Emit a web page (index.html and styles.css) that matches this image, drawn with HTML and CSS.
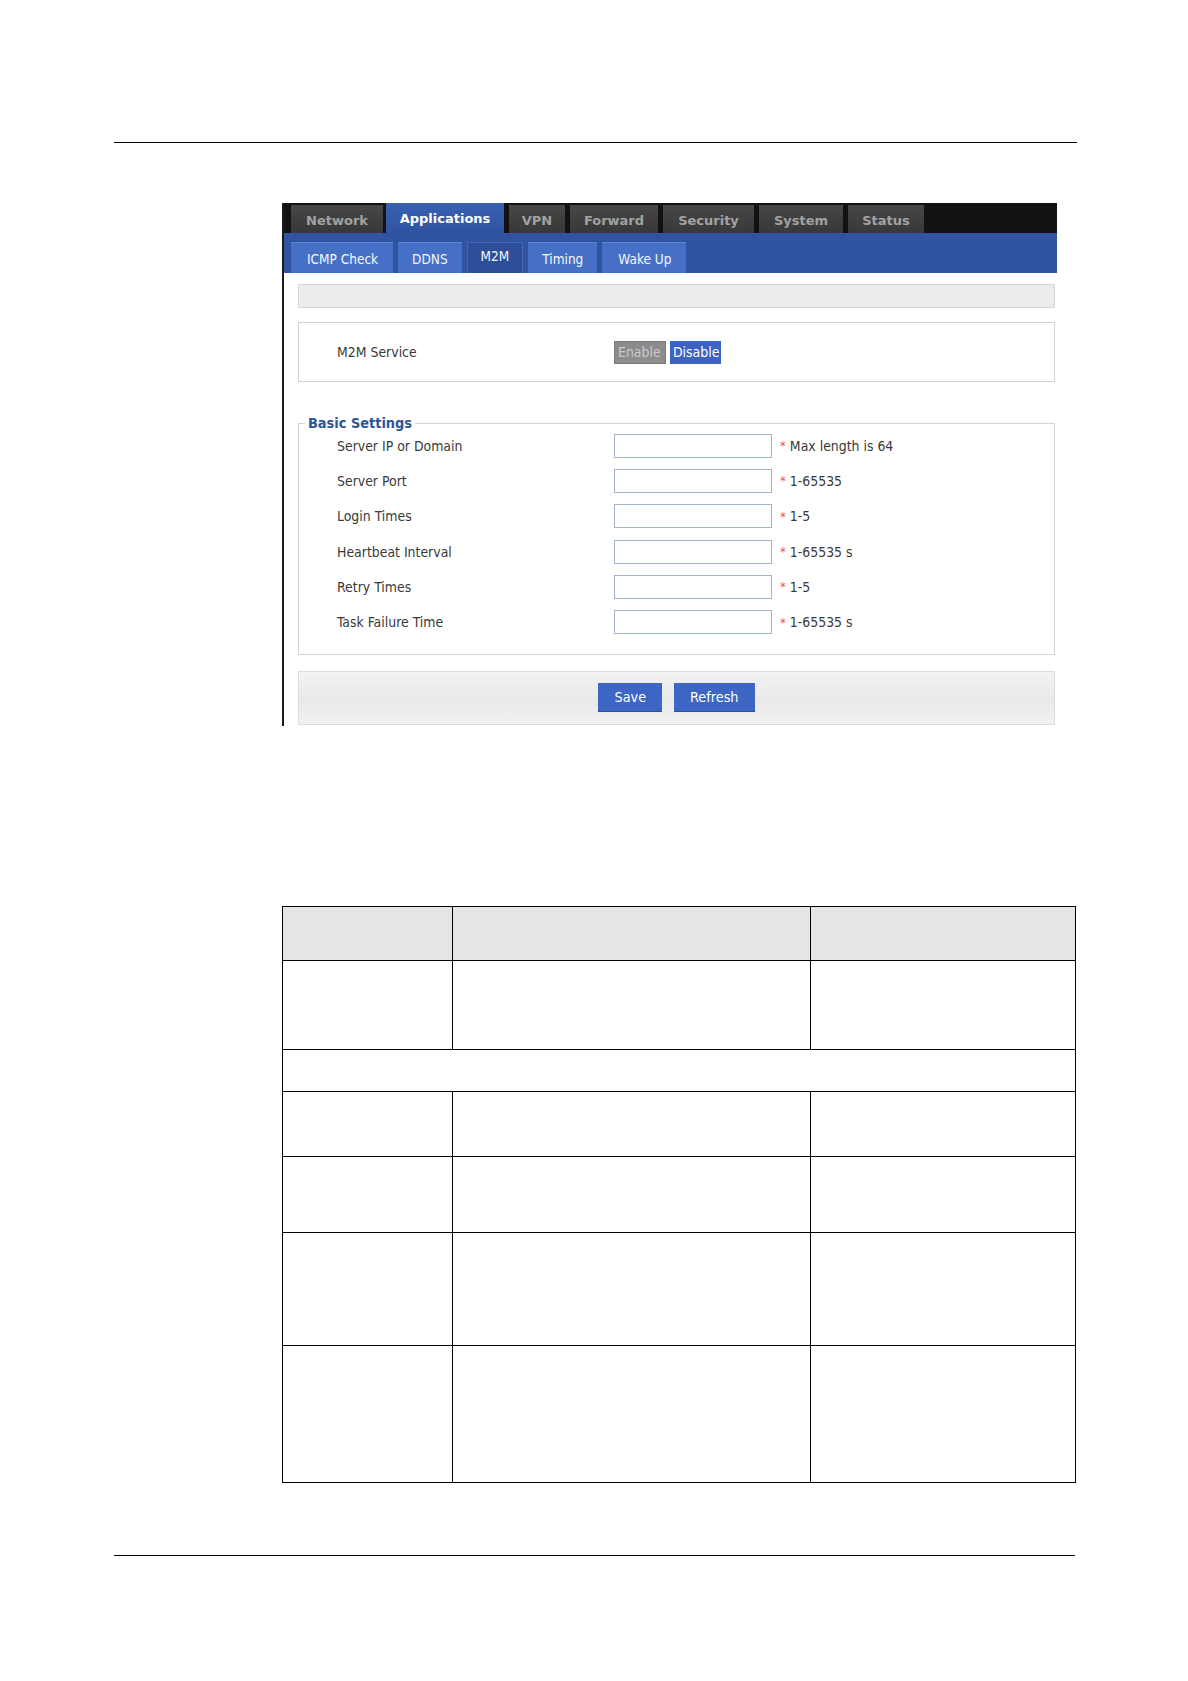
FILE: index.html
```html
<!DOCTYPE html>
<html lang="en">

<head>
    <meta charset="UTF-8" />
    <meta name="viewport" content="width=device-width, initial-scale=1.0" />
    <title>M2M settings</title>
    <link rel="stylesheet" href="styles.css">
</head>

<body>
    <div class="page">
        <div class="rule"></div>

        <div class="shot">
            <div class="mainnav">
                <span class="tab tab-network">Network</span>
                <span class="tab tab-apps active">Applications</span>
                <span class="tab tab-vpn">VPN</span>
                <span class="tab tab-forward">Forward</span>
                <span class="tab tab-security">Security</span>
                <span class="tab tab-system">System</span>
                <span class="tab tab-status">Status</span>
            </div>
            <div class="subnav">
                <span class="subtab wide">ICMP Check</span>
                <span class="subtab">DDNS</span>
                <span class="subtab active">M2M</span>
                <span class="subtab">Timing</span>
                <span class="subtab wide">Wake Up</span>
            </div>

            <div class="content">
                <div class="titlebar"></div>

                <div class="service-box">
                    <span class="label">M2M Service</span>
                    <div class="switch">
                        <span class="sw-btn off">Enable</span>
                        <span class="sw-btn on">Disable</span>
                    </div>
                </div>

                <fieldset class="settings">
                    <legend>Basic Settings</legend>
                    <div class="row">
                        <span class="label">Server IP or Domain</span>
                        <input type="text" class="field" />
                        <span class="req">*</span><span class="hint">Max length is 64</span>
                    </div>
                    <div class="row">
                        <span class="label">Server Port</span>
                        <input type="text" class="field" />
                        <span class="req">*</span><span class="hint">1-65535</span>
                    </div>
                    <div class="row">
                        <span class="label">Login Times</span>
                        <input type="text" class="field" />
                        <span class="req">*</span><span class="hint">1-5</span>
                    </div>
                    <div class="row">
                        <span class="label">Heartbeat Interval</span>
                        <input type="text" class="field" />
                        <span class="req">*</span><span class="hint">1-65535 s</span>
                    </div>
                    <div class="row">
                        <span class="label">Retry Times</span>
                        <input type="text" class="field" />
                        <span class="req">*</span><span class="hint">1-5</span>
                    </div>
                    <div class="row">
                        <span class="label">Task Failure Time</span>
                        <input type="text" class="field" />
                        <span class="req">*</span><span class="hint">1-65535 s</span>
                    </div>
                </fieldset>

                <div class="actions">
                    <button class="action-btn">Save</button>
                    <button class="action-btn">Refresh</button>
                </div>
            </div>
        </div>

        <table class="params">
            <tr class="head">
                <td class="c1"></td>
                <td class="c2"></td>
                <td class="c3"></td>
            </tr>
            <tr class="r1">
                <td></td>
                <td></td>
                <td></td>
            </tr>
            <tr class="section">
                <td colspan="3"></td>
            </tr>
            <tr class="r2">
                <td></td>
                <td></td>
                <td></td>
            </tr>
            <tr class="r3">
                <td></td>
                <td></td>
                <td></td>
            </tr>
            <tr class="r4">
                <td></td>
                <td></td>
                <td></td>
            </tr>
            <tr class="r5">
                <td></td>
                <td></td>
                <td></td>
            </tr>
        </table>

        <div class="rule rule-bottom"></div>
    </div>
</body>

</html>
```

FILE: styles.css
```css
:root {
    --ui-font: "DejaVu Sans Condensed", "DejaVu Sans", sans-serif;
    --tab-font: "DejaVu Sans", Verdana, sans-serif;
    --text-color: #333;
    --blue-bar: #3054a2;
    --blue-tab: #4670c5;
    --box-border: #d4d4d4;
}

body {
    margin: 0;
    padding: 0;
    background: #fff;
    font-family: var(--ui-font);
    color: var(--text-color);
}

.page {
    padding-top: 142px;
}

.rule {
    margin-left: 114px;
    width: 963px;
    height: 1px;
    background: #000;
}

.rule-bottom {
    margin-top: 72px;
    width: 961px;
}

/* screenshot panel */
.shot {
    margin: 60px 0 0 282px;
    width: 773px;
    border-left: 2px solid #1a1a1a;
}

.mainnav {
    height: 30px;
    background: #121212;
    display: flex;
    align-items: flex-end;
    padding-left: 7px;
    gap: 5px;
}

.tab {
    height: 28px;
    box-sizing: border-box;
    padding-top: 3px;
    line-height: 25px;
    text-align: center;
    background: linear-gradient(#474747, #383838);
    color: #a2a2a2;
    font-family: var(--tab-font);
    font-weight: bold;
    font-size: 13px;
}

.tab-network { width: 92px; }
.tab-apps { width: 118px; }
.tab-vpn { width: 56px; }
.tab-forward { width: 88px; }
.tab-security { width: 91px; }
.tab-system { width: 84px; }
.tab-status { width: 76px; }

.tab.active {
    height: 30px;
    padding-top: 3px;
    margin-left: -2px;
    background: linear-gradient(#3a60b2, var(--blue-bar));
    color: #fff;
}

.subnav {
    height: 40px;
    box-sizing: border-box;
    background: var(--blue-bar);
    display: flex;
    align-items: flex-end;
    padding-left: 7px;
    gap: 5px;
}

.subtab {
    height: 31px;
    line-height: 33px;
    padding: 0 14px;
    box-sizing: border-box;
    background: var(--blue-tab);
    border-top: 1px solid #5a86d8;
    color: #f4f6fb;
    font-size: 13.5px;
}

.subtab.wide {
    padding: 0 15px 0 16px;
}

.subtab.active {
    background: #2d4e99;
    border: 1px solid #4266b4;
    border-bottom: none;
    line-height: 27px;
    padding: 0 13px;
}

.content {
    padding: 11px 2px 1px 14px;
}

.titlebar {
    height: 24px;
    box-sizing: border-box;
    background: #ececec;
    border: 1px solid #d8d8d8;
}

.service-box {
    margin-top: 14px;
    height: 60px;
    box-sizing: border-box;
    border: 1px solid var(--box-border);
    display: flex;
    align-items: center;
    padding-left: 38px;
}

.label {
    width: 277px;
    font-size: 13.9px;
    color: #3a3a3a;
}

.switch {
    display: flex;
    gap: 4px;
}

.sw-btn {
    height: 23px;
    line-height: 23px;
    padding: 0 3px;
    font-size: 13.9px;
}

.sw-btn.off {
    width: 52px;
    box-sizing: border-box;
    background: #8c8c8c;
    border: 1px solid #7a7a7a;
    color: #c9c9c9;
    line-height: 21px;
}

.sw-btn.on {
    width: 51px;
    box-sizing: border-box;
    background: #3d63c0;
    color: #fff;
}

.settings {
    margin: 33px 0 0;
    padding: 0 0 14px 38px;
    border: 1px solid var(--box-border);
}

.settings legend {
    padding: 0 3px;
    margin-left: -32px;
    color: #2b5596;
    font-weight: bold;
    font-size: 14.4px;
    line-height: 16px;
}

.row {
    height: 35.3px;
    display: flex;
    align-items: center;
}

.settings .row:first-of-type {
    margin-top: -3px;
}

.field {
    width: 158px;
    height: 24px;
    box-sizing: border-box;
    margin: 0;
    border: 1px solid #a5b4c4;
    background: #fff;
}

.req {
    margin-left: 8px;
    color: #e0566a;
    font-size: 13px;
}

.hint {
    margin-left: 4px;
    font-size: 13.9px;
    color: #3a3a3a;
}

.actions {
    margin-top: 16px;
    height: 54px;
    box-sizing: border-box;
    border: 1px solid #dcdcdc;
    background: linear-gradient(#f3f3f3, #e9e9e9 55%, #f2f2f2);
    display: flex;
    align-items: center;
    justify-content: center;
    gap: 12px;
}

.action-btn {
    height: 29px;
    padding: 0 16px;
    border: none;
    background: #3d66c4;
    border-bottom: 1px solid #2c4f9e;
    color: #fff;
    font-family: var(--ui-font);
    font-size: 14.3px;
}

/* parameter table */
.params {
    margin: 180px 0 0 282px;
    width: 794px;
    border-collapse: collapse;
}

.params td {
    border: 1px solid #000;
    padding: 0;
}

.params .c1 {
    width: 169px;
}

.params .c2 {
    width: 357px;
}

.params .head td {
    height: 53px;
    background: #e5e5e5;
}

.params .r1 td {
    height: 88px;
}

.params .section td {
    height: 41px;
}

.params .r2 td {
    height: 64px;
}

.params .r3 td {
    height: 75px;
}

.params .r4 td {
    height: 112px;
}

.params .r5 td {
    height: 136px;
}
```
